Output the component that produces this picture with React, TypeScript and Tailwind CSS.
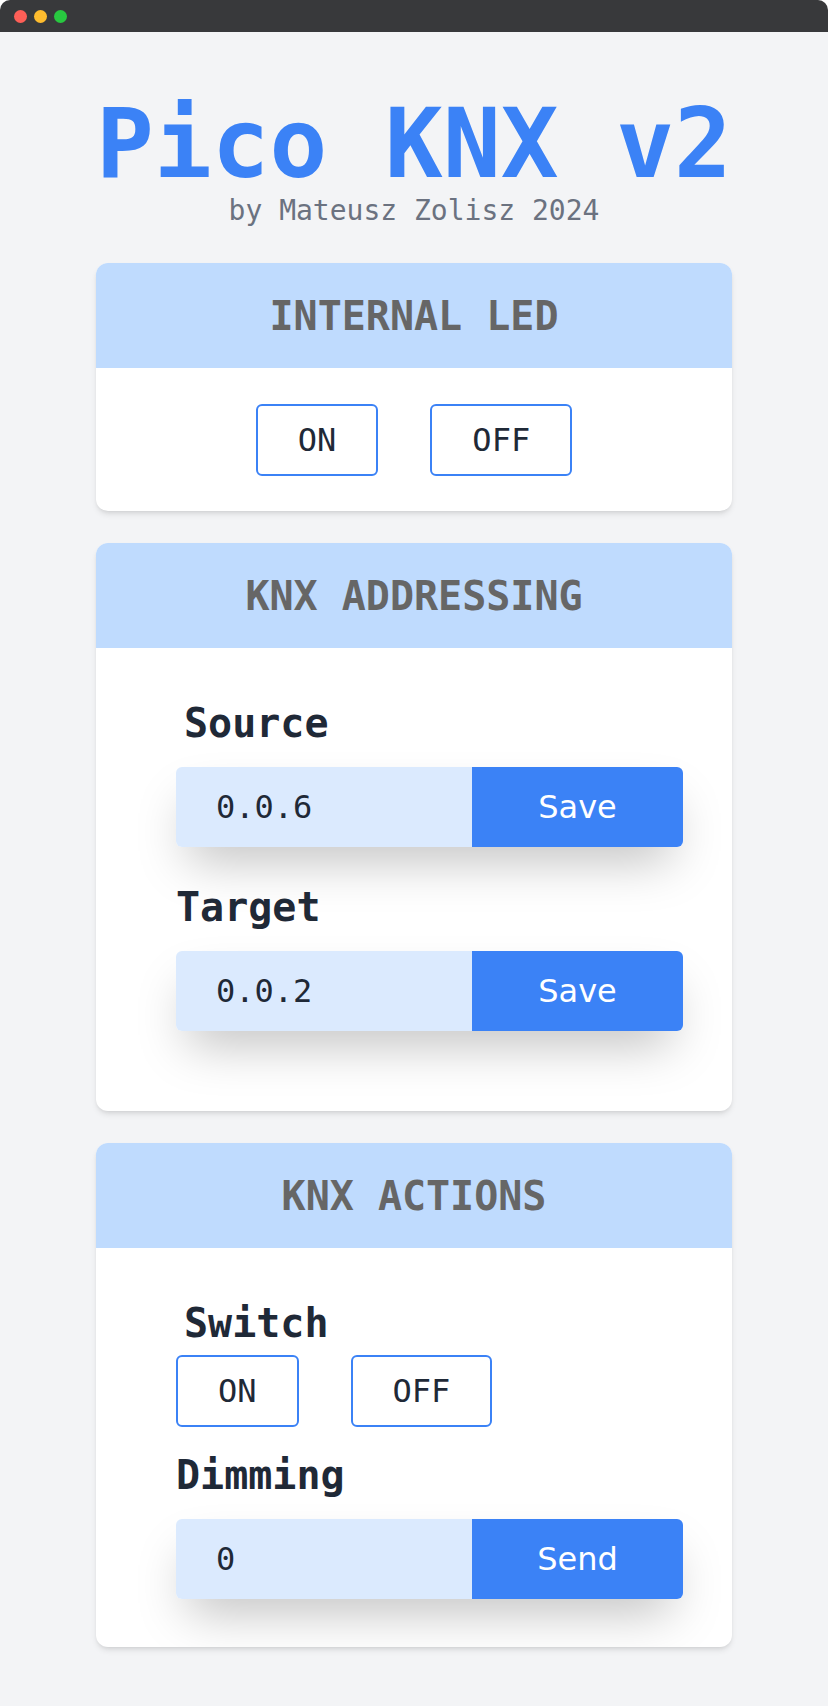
const mono = "font-['DejaVu_Sans_Mono',monospace]";

const OutlineButton = ({ label }: { label: string }) => (
    <button className="h-[72px] px-10 border-2 border-[#3b82f6] rounded-md bg-white text-[32px] leading-none text-[#1f2937]">
        {label}
    </button>
);

const InputRow = ({ value, action }: { value: string; action: string }) => (
    <div className="flex h-20 w-[507px] rounded-md shadow-2xl">
        <input
            defaultValue={value}
            className={`${mono} w-[296px] h-full px-10 bg-[#dbeafe] rounded-l-md text-[32px] text-[#1f2937] outline-none`}
        />
        <button className="flex-1 h-full bg-[#3b82f6] rounded-r-md text-white text-[32px] font-['DejaVu_Sans',sans-serif]">
            {action}
        </button>
    </div>
);

const Card = ({ title, children, bodyClass }: { title: string; children: React.ReactNode; bodyClass: string }) => (
    <section className="bg-white rounded-xl shadow-md overflow-hidden">
        <div className="h-[105px] bg-[#bfdbfe] flex items-center justify-center">
            <h2 className="text-[40px] leading-none font-bold text-[#666666]">{title}</h2>
        </div>
        <div className={bodyClass}>{children}</div>
    </section>
);

const Label = ({ text, className }: { text: string; className?: string }) => (
    <h3 className={`text-[40px] leading-[48px] font-bold text-[#1f2937] ${className ?? ""}`}>{text}</h3>
);

export default function App() {
    return (
        <div className={`${mono} w-[828px] h-[1706px] bg-white`}>
            <div className="rounded-t-[10px] overflow-hidden">
                <div className="h-8 bg-[#38393b] flex items-center gap-[7px] pl-[14px]">
                    <span className="w-[13px] h-[13px] rounded-full bg-[#fe5f57]" />
                    <span className="w-[13px] h-[13px] rounded-full bg-[#febc2e]" />
                    <span className="w-[13px] h-[13px] rounded-full bg-[#28c840]" />
                </div>
                <main className="h-[1674px] bg-[#f3f4f6] pt-16 px-24">
                    <h1 className="text-8xl leading-none font-bold text-[#3b82f6] text-center">Pico KNX v2</h1>
                    <p className="text-[28px] leading-[38px] text-[#6b7280] text-center">by Mateusz Zolisz 2024</p>

                    <div className="mt-[33px] flex flex-col gap-8">
                        <Card title="INTERNAL LED" bodyClass="pt-9 pb-[35px] flex justify-center gap-[52px]">
                            <OutlineButton label="ON" />
                            <OutlineButton label="OFF" />
                        </Card>

                        <Card title="KNX ADDRESSING" bodyClass="pt-[51px] pb-20 pl-20">
                            <Label text="Source" className="ml-2" />
                            <div className="mt-5">
                                <InputRow value="0.0.6" action="Save" />
                            </div>
                            <Label text="Target" className="mt-9" />
                            <div className="mt-5">
                                <InputRow value="0.0.2" action="Save" />
                            </div>
                        </Card>

                        <Card title="KNX ACTIONS" bodyClass="pt-[51px] pb-12 pl-20">
                            <Label text="Switch" className="ml-2" />
                            <div className="mt-2 flex gap-[52px]">
                                <OutlineButton label="ON" />
                                <OutlineButton label="OFF" />
                            </div>
                            <Label text="Dimming" className="mt-6" />
                            <div className="mt-5">
                                <InputRow value="0" action="Send" />
                            </div>
                        </Card>
                    </div>
                </main>
            </div>
        </div>
    );
}
